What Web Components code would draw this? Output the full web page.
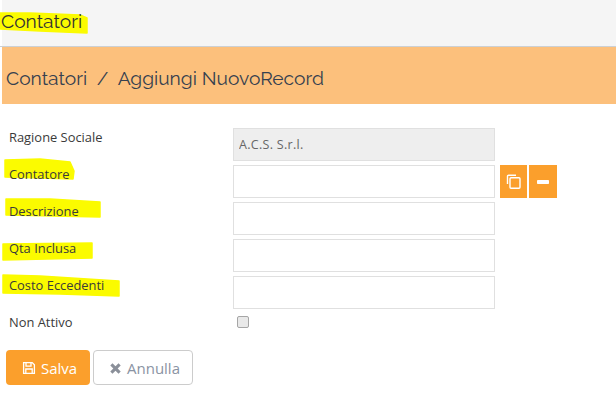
<!DOCTYPE html>
<html lang="it">
<head>
<meta charset="utf-8">
<title>Contatori</title>
<style>
  html, body { margin: 0; background: #fff; }
  body { font-family: "Open Sans", "Liberation Sans", sans-serif; color: #333; overflow: hidden; }
  .page { padding-left: 2px; }
  .form { display: block; padding: 24px 0 0 0; margin-left: -2px; }
</style>
</head>
<body>
<div class="page">
  <page-title points="0,13 30,13 80,15 87,18 87,33 40,31 0,29">Contatori</page-title>
  <crumb-bar>Contatori&nbsp; /&nbsp; Aggiungi NuovoRecord</crumb-bar>
  <div class="form">
    <form-row label="Ragione Sociale" value="A.C.S. S.r.l." disabled></form-row>
    <form-row label="Contatore" points="5,-5 40,-6 70,-3 74,6 73,14 5,12">
      <icon-button slot="extra" icon="copy"></icon-button>
      <icon-button slot="extra" icon="minus"></icon-button>
    </form-row>
    <form-row label="Descrizione" points="6,-3 50,-3 100,0 100,15 6,13"></form-row>
    <form-row label="Qta Inclusa" points="3,5 92,4 92,19 3,21"></form-row>
    <form-row label="Costo Eccedenti" points="3,-1 40,0 119,5 119,20 60,18 3,17"></form-row>
    <check-row label="Non Attivo"></check-row>
    <form-actions>
      <action-button kind="primary" icon="save">Salva</action-button>
      <action-button kind="default" icon="times">Annulla</action-button>
    </form-actions>
  </div>
</div>

<script>
const ICONS = {
  copy: '<svg width="17" height="17" viewBox="0 0 17 17" fill="none" stroke="#fff" stroke-width="1.4"><path d="M11 2.2H3.5a1 1 0 0 0-1 1V11"/><rect x="5" y="4.8" width="10" height="10.5" rx="1"/></svg>',
  minus: '<svg width="12" height="4" viewBox="0 0 12 4"><rect width="12" height="4" rx=".8" fill="#fff"/></svg>',
  save: '<svg width="14" height="14" viewBox="0 0 14 14" fill="none" stroke="#fff" stroke-width="1.3"><path d="M1.6 1.6h8.6l2.2 2.2v8.6H1.6z"/><path d="M4 1.8v3.4h5V1.8M3.8 12.2V8h6.4v4.2"/></svg>',
  times: '<svg width="13" height="13" viewBox="0 0 12 12"><path d="M1.2 3.2 3.2 1.2 6 4l2.8-2.8 2 2L8 6l2.8 2.8-2 2L6 8l-2.8 2.8-2-2L4 6z" fill="#8a8f99"/></svg>'
}

/* yellow pen stroke that was painted over the screenshot */
class MarkerStroke extends HTMLElement {
  constructor () {
    super()
    this.attachShadow({ mode: 'open' }).innerHTML = `
      <style>
        :host { position: absolute; left: 0; top: 0; width: 1px; height: 1px; }
        svg { display: block; overflow: visible; }
      </style>
      <svg width="1" height="1"><polygon fill="#fbfb00" stroke="#fbfb00" stroke-linejoin="round" stroke-width="1.5" points="${this.getAttribute('points')}"/></svg>`
  }
}

class PageTitle extends HTMLElement {
  constructor () {
    super()
    const points = this.getAttribute('points')
    this.attachShadow({ mode: 'open' }).innerHTML = `
      <style>
        :host { display: block; position: relative; height: 46px; background: #f5f5f5; border-bottom: 1px solid #ccd0d4; margin-left: -2px; padding-left: 2px; background-clip: content-box; }
        .text { position: relative; display: block; padding-top: 9px; margin-left: -1px; font: 19.2px/24px Raleway, Lato, sans-serif; color: #333; }
      </style>
      <marker-stroke points="${points}"></marker-stroke>
      <span class="text"><slot></slot></span>`
  }
}

class CrumbBar extends HTMLElement {
  constructor () {
    super()
    this.attachShadow({ mode: 'open' }).innerHTML = `
      <style>
        :host { display: flex; align-items: center; box-sizing: border-box; height: 57px; padding: 5px 0 0 4px; background: #fcc07c; font: 19.2px/24px Raleway, Lato, sans-serif; color: #36404f; }
      </style>
      <slot></slot>`
  }
}

class FormRow extends HTMLElement {
  constructor () {
    super()
    const points = this.getAttribute('points')
    const disabled = this.hasAttribute('disabled')
    this.attachShadow({ mode: 'open' }).innerHTML = `
      <style>
        :host { display: grid; grid-template-columns: 233px 262px auto; position: relative; height: 33px; margin-bottom: 4px; font: 12.9px/18px "Open Sans", sans-serif; color: #3a3a3a; }
        label { position: relative; padding: 0 0 0 9px; }
        input { box-sizing: border-box; width: 262px; height: 33px; margin: 0; padding: 0 5px; border: 1.5px solid #e0e0e0; background: #fff; font: 12.5px "Open Sans", sans-serif; letter-spacing: .3px; color: #555; outline: 0; }
        input:disabled { background: #eee; -webkit-text-fill-color: #666; opacity: 1; }
        .extra { display: flex; gap: 2px; padding-left: 5px; }
      </style>
      ${points ? `<marker-stroke points="${points}"></marker-stroke>` : ''}
      <label>${this.getAttribute('label')}</label>
      <input value="${this.getAttribute('value') || ''}" ${disabled ? 'disabled' : ''}>
      <div class="extra"><slot name="extra"></slot></div>`
  }
}

class CheckRow extends HTMLElement {
  constructor () {
    super()
    this.attachShadow({ mode: 'open' }).innerHTML = `
      <style>
        :host { display: grid; grid-template-columns: 233px auto; align-items: center; height: 18px; font: 12.9px/18px "Open Sans", sans-serif; color: #3a3a3a; }
        label { padding-left: 9px; }
        .box { box-sizing: border-box; width: 12px; height: 12px; margin-left: 4px; border: 1px solid #a6a6a6; border-radius: 2px; background: #e9e9e9; }
      </style>
      <label>${this.getAttribute('label')}</label>
      <div class="box"></div>`
  }
}

class IconButton extends HTMLElement {
  constructor () {
    super()
    this.attachShadow({ mode: 'open' }).innerHTML = `
      <style>
        :host { display: flex; align-items: center; justify-content: center; width: 27px; height: 33px; background: #fb9f2c; }
        :host([icon="minus"]) { width: 28px; }
        svg { display: block; }
      </style>
      ${ICONS[this.getAttribute('icon')]}`
  }
}

class FormActions extends HTMLElement {
  constructor () {
    super()
    this.attachShadow({ mode: 'open' }).innerHTML = `
      <style>
        :host { display: flex; gap: 3px; padding: 19px 0 0 6px; }
      </style>
      <slot></slot>`
  }
}

class ActionButton extends HTMLElement {
  constructor () {
    super()
    this.attachShadow({ mode: 'open' }).innerHTML = `
      <style>
        :host { box-sizing: border-box; display: flex; align-items: center; justify-content: center; gap: 5px; height: 35px; padding-left: 3px; border-radius: 4px; font: 15px/18px "Open Sans", sans-serif; }
        :host([kind="primary"]) { width: 84px; background: #fb9f2c; color: #fff; }
        :host([kind="default"]) { width: 100px; background: #fff; border: 1px solid #ccc; color: #8a93a3; }
        svg { display: block; margin-top: 1px; }
      </style>
      ${ICONS[this.getAttribute('icon')]}<span><slot></slot></span>`
  }
}

// children first, so their hosts are ready when the parents upgrade
customElements.define('marker-stroke', MarkerStroke)
customElements.define('icon-button', IconButton)
customElements.define('action-button', ActionButton)
customElements.define('form-actions', FormActions)
customElements.define('page-title', PageTitle)
customElements.define('crumb-bar', CrumbBar)
customElements.define('form-row', FormRow)
customElements.define('check-row', CheckRow)
</script>
</body>
</html>
